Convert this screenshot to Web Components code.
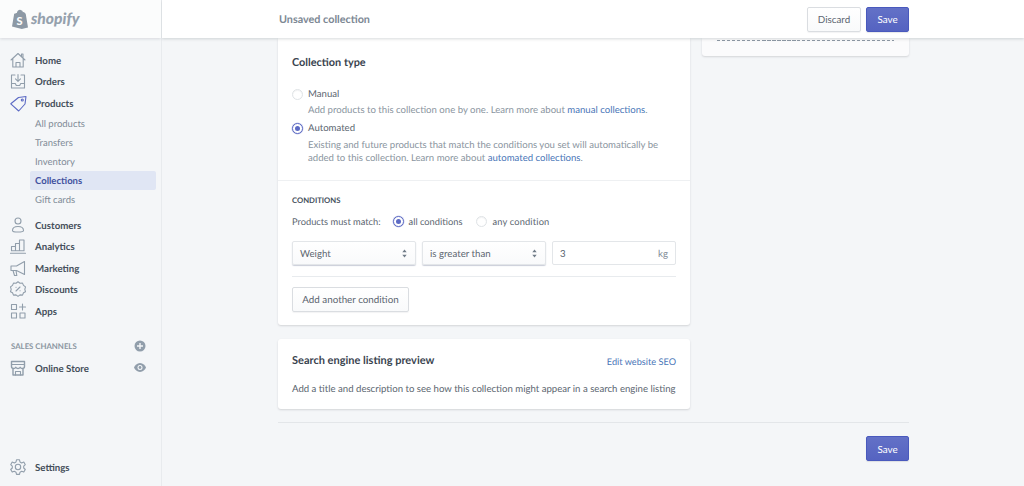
<!DOCTYPE html>
<html lang="en">
<head>
<meta charset="utf-8">
<title>Unsaved collection</title>
<style>
  html, body { margin: 0; height: 100%; overflow: hidden; background: #f4f6f8; }
  body { font-family: Lato, "Liberation Sans", sans-serif; font-size: 9.6px; color: #212b36; text-rendering: geometricPrecision; }
</style>
</head>
<body>
<admin-app>
  <shop-sidebar slot="sidebar">
    <nav-item icon="home" style="--top:11px">Home</nav-item>
    <nav-item icon="orders">Orders</nav-item>
    <nav-item icon="products" active>Products</nav-item>
    <sub-item>All products</sub-item>
    <sub-item>Transfers</sub-item>
    <sub-item>Inventory</sub-item>
    <sub-item selected>Collections</sub-item>
    <sub-item>Gift cards</sub-item>
    <nav-item icon="customers" style="--top:5px">Customers</nav-item>
    <nav-item icon="analytics">Analytics</nav-item>
    <nav-item icon="marketing">Marketing</nav-item>
    <nav-item icon="discounts">Discounts</nav-item>
    <nav-item icon="apps">Apps</nav-item>
    <channel-head>SALES CHANNELS</channel-head>
    <nav-item icon="store" trailing="eye">Online Store</nav-item>
    <nav-item icon="settings" slot="bottom">Settings</nav-item>
  </shop-sidebar>
  <top-bar slot="bar"></top-bar>
  <collection-form slot="content"></collection-form>
</admin-app>

<script>
const ICONS = {
  home: '<path d="M2 9 9 2.500 16 9M3.800 7.500V16h10.400V7.500M7 16v-4.500h4V16M12.500 5V3h1.500v3.500"/>',
  orders: '<path d="M6 3H2.500v13h13V3H12M2.500 11.500h3.800l1 2h3.400l1-2h3.800M9 2.500v6.500M6.500 6.800 9 9.300l2.500-2.500"/>',
  products: '<path d="M1.800 9.800 9.500 3.500 17 2.500l-1 7.500-6.300 7z"/><circle cx="13.300" cy="6" r="1"/>',
  customers: '<circle cx="9" cy="5" r="3"/><path d="M3.500 14.500c0-2.500 2-4 5.500-4s5.500 1.500 5.500 4c0 1.200-1 1.500-5.500 1.500s-5.500-.3-5.500-1.500z"/>',
  analytics: '<path d="M1.500 16.200h15M2.500 13.800V9.500h4v4.300M6.500 13.800V6.500h4v7.300M10.500 13.800V3h4.500v10.800M2.500 13.800H15"/>',
  marketing: '<path d="M2 7h5.500l8-4.500v13L7.500 11.500H2zM4 11.500 5.500 16.500h2.300L7 11.500"/>',
  discounts: '<path d="m9 1.800 2 1.500 2.500-.2 1 2.300 2 1.500-.7 2.400.7 2.400-2 1.100-1 2.300-2.500-.2-2 1.500-2-1.500-2.500.2-1-2.300-2-1.100.7-2.400-.7-2.400 2-1.500 1-2.300 2.500.2z"/><path d="m7 11 4-4M7 7.200h.1M11 10.800h.1"/>',
  apps: '<path d="M2.500 2.500h5v5h-5zM2.500 11h5v5h-5zM11 11h5v5h-5zM13.500 2v6M10.500 5h6"/>',
  store: '<path d="M4 10v6h10v-6M2.500 2.500h13v5c0 1.500-1.300 2-2.200 2s-1.600-.5-2.100-1.200c-.5.700-1.300 1.200-2.200 1.200s-1.700-.5-2.200-1.200c-.5.700-1.200 1.200-2.100 1.200S2.500 9 2.500 7.500z" stroke-width="1.400"/><path d="M2.500 5.500h13M6.500 16v-3.500h5V16"/>',
  settings: '<path d="m7.500 1.800h3l.5 2.200 1.700.9 2.100-.8 1.500 2.600-1.600 1.500v1.800l1.600 1.500-1.500 2.600-2.100-.8-1.700.9-.5 2.200h-3l-.5-2.200-1.700-.9-2.100.8-1.500-2.600 1.600-1.500V8.200L1.700 6.700l1.500-2.600 2.100.8L7 4z"/><circle cx="9" cy="9" r="2.700"/>'
};

class AdminApp extends HTMLElement {
  constructor() {
    super();
    this.attachShadow({ mode: 'open' }).innerHTML = `
      <style>
        :host { display: grid; grid-template-columns: 162px 1fr; height: 486px; width: 1024px; overflow: hidden; }
        .side { min-width: 0; }
        main { display: flex; flex-direction: column; min-width: 0; height: 486px; overflow: hidden; }
      </style>
      <div class="side"><slot name="sidebar"></slot></div>
      <main><slot name="bar"></slot><slot name="content"></slot></main>`;
  }
}

class ShopSidebar extends HTMLElement {
  constructor() {
    super();
    this.attachShadow({ mode: 'open' }).innerHTML = `
      <style>
        :host { display: flex; flex-direction: column; height: 486px; box-sizing: border-box; background: #f4f6f8; border-right: 1px solid #e8ebee; position: relative; }
        header { height: 38px; flex: none; background: #fbfcfc; box-shadow: 0 1px 3px rgba(33,43,54,.14); display: flex; align-items: center; gap: 2px; padding-left: 11px; box-sizing: border-box; }
        .word { font: italic 900 15.600px Lato, sans-serif; color: #95a1ad; margin-top: -1px; }
        nav { display: flex; flex-direction: column; }
        .bottom { margin-top: auto; padding-bottom: 8px; }
      </style>
      <header>
        <svg width="18" height="21" viewBox="0 0 18 21"><path fill="#8d99a5" d="M1 17.500 3.200 4.800c1.400-.5 2.200-.8 2.600-.9C6.300 2 7.600.8 9 .8c.5 0 .9.200 1.100.5 1 0 1.600.9 1.800 1.900l1.100-.3.800 1 .9.800L17 18.500 10.800 20z"/><text x="5.500" y="15.500" font-family="Lato" font-weight="900" font-size="11" fill="#fbfcfc">S</text></svg>
        <span class="word">shopify</span>
      </header>
      <nav><slot></slot></nav>
      <div class="bottom"><slot name="bottom"></slot></div>`;
  }
}

class NavItem extends HTMLElement {
  constructor() {
    super();
    const name = this.getAttribute('icon');
    const active = this.hasAttribute('active');
    const eye = this.getAttribute('trailing') === 'eye';
    this.attachShadow({ mode: 'open' }).innerHTML = `
      <style>
        :host { display: block; margin-top: var(--top, 0); }
        .row { display: flex; align-items: center; height: 21.600px; padding-left: 9px; padding-right: 15px; }
        svg.main { width: 18px; height: 18px; flex: none; fill: none; stroke: ${active ? '#5c6ac4' : '#919eab'}; stroke-width: 1.100; stroke-linejoin: round; stroke-linecap: round; }
        span { margin: 2px 0 0 8px; font-weight: 700; color: #454f5b; font-size: 9.700px; flex: 1; white-space: nowrap; }
      </style>
      <div class="row">
        <svg class="main" viewBox="0 0 18 18">${ICONS[name]}</svg>
        <span><slot></slot></span>
        ${eye ? '<svg width="12" height="9" viewBox="0 0 12 9"><path fill="#919eab" d="M6 0C3 0 1 2.300 0 4.500 1 6.700 3 9 6 9s5-2.300 6-4.500C11 2.300 9 0 6 0z"/><circle cx="6" cy="4.500" r="2.500" fill="#f4f6f8"/><circle cx="6" cy="4.500" r="1.400" fill="#919eab"/></svg>' : ''}
      </div>`;
  }
}

class SubItem extends HTMLElement {
  constructor() {
    super();
    const sel = this.hasAttribute('selected');
    this.attachShadow({ mode: 'open' }).innerHTML = `
      <style>
        :host { display: flex; align-items: center; box-sizing: border-box; height: 19px; margin-left: 30px; margin-right: 5px; padding: 2px 0 0 5px; border-radius: 2px; font-size: 9.500px; white-space: nowrap;
          background: ${sel ? '#e0e6f4' : 'transparent'}; color: ${sel ? '#43529f' : '#7f8b97'}; font-weight: ${sel ? 700 : 400}; }
      </style><slot></slot>`;
  }
}

class ChannelHead extends HTMLElement {
  constructor() {
    super();
    this.attachShadow({ mode: 'open' }).innerHTML = `
      <style>
        :host { display: flex; align-items: center; justify-content: space-between; height: 19px; margin-top: 15px; margin-bottom: 1px; padding: 0 15px 0 11px; font-size: 7.800px; font-weight: 700; color: #8a95a0; }
      </style>
      <span><slot></slot></span>
      <svg width="12" height="12" viewBox="0 0 12 12"><circle cx="6" cy="6" r="5.500" fill="#919eab"/><path d="M6 3v6M3 6h6" stroke="#f4f6f8" stroke-width="1.400"/></svg>`;
  }
}

class AppButton extends HTMLElement {
  constructor() {
    super();
    const primary = this.hasAttribute('primary');
    this.attachShadow({ mode: 'open' }).innerHTML = `
      <style>
        :host { display: inline-flex; align-items: center; justify-content: center; box-sizing: border-box; height: 25px; padding: 2px 11px 0; border-radius: 2px; font-size: 9.800px; white-space: nowrap;
          ${primary
            ? 'background: linear-gradient(#6371c7,#5563c1); color: #fff; border: 1px solid #4959bd; box-shadow: 0 1px 1px rgba(22,29,37,.1);'
            : 'background: linear-gradient(#fff,#f9fafb); color: #5c6670; border: 1px solid #dadde1; box-shadow: 0 1px 1px rgba(22,29,37,.05);'}
        }
      </style><slot></slot>`;
  }
}

class TopBar extends HTMLElement {
  constructor() {
    super();
    this.attachShadow({ mode: 'open' }).innerHTML = `
      <style>
        :host { display: flex; align-items: center; flex: none; height: 38px; box-sizing: border-box; background: #fff; box-shadow: 0 1px 3px rgba(33,43,54,.18); padding: 0 115px 0 117px; position: relative; z-index: 2; }
        .title { flex: 1; color: #7d8894; font-weight: 700; font-size: 10.800px; }
        .acts { display: flex; gap: 5px; }
        app-button.d { width: 54px; }
        app-button.s { width: 43px; }
      </style>
      <span class="title">Unsaved collection</span>
      <div class="acts"><app-button class="d">Discard</app-button><app-button class="s" primary>Save</app-button></div>`;
  }
}

class RadioDot extends HTMLElement {
  constructor() {
    super();
    const on = this.hasAttribute('checked');
    this.attachShadow({ mode: 'open' }).innerHTML = `
      <style>
        :host { display: inline-block; flex: none; width: 11px; height: 11px; box-sizing: border-box; border-radius: 50%; position: relative;
          background: #fff; border: 1px solid ${on ? '#5c6ac4' : '#dfe3e6'}; box-shadow: ${on ? '0 0 0 .5px rgba(92,106,196,.35)' : 'inset 0 1px 1px rgba(22,29,37,.05)'}; }
        i { position: absolute; inset: 2px; border-radius: 50%; background: ${on ? '#5c6ac4' : 'transparent'}; }
      </style><i></i>`;
  }
}

class RadioOption extends HTMLElement {
  constructor() {
    super();
    this.attachShadow({ mode: 'open' }).innerHTML = `
      <style>
        :host { display: block; }
        .l { display: flex; align-items: center; gap: 5px; height: 14px; color: #5c6670; font-size: 9.600px; }
        .h { margin-left: 16px; margin-top: 3px; color: #8a95a0; line-height: 13.500px; font-size: 9.600px; }
      </style>
      <div class="l"><radio-dot ${this.hasAttribute('checked') ? 'checked' : ''}></radio-dot><span>${this.getAttribute('label')}</span></div>
      <div class="h"><slot></slot></div>`;
  }
}

class SelectBox extends HTMLElement {
  constructor() {
    super();
    this.attachShadow({ mode: 'open' }).innerHTML = `
      <style>
        :host { display: flex; align-items: center; justify-content: space-between; box-sizing: border-box; height: 24px; width: 124px; padding: 2px 8px 0 7px; border: 1px solid #e3e6e9; border-radius: 2px; background: linear-gradient(#fff,#f9fafb); box-shadow: 0 1px 1px rgba(66,79,120,.28); color: #5c6670; font-size: 9.700px; }
        svg { margin-top: -2px; }
      </style>
      <slot></slot>
      <svg width="5" height="9" viewBox="0 0 5 9"><path fill="#707c88" d="M2.500 .5 4.700 3.300H.3zM2.500 8.500.3 5.700h4.400z"/></svg>`;
  }
}

class CollectionForm extends HTMLElement {
  constructor() {
    super();
    this.attachShadow({ mode: 'open' }).innerHTML = `
      <style>
        :host { display: block; padding-left: 116px; }
        a { color: #4a76b8; text-decoration: none; }
        .cols { display: flex; gap: 12px; align-items: flex-start; }
        .left { width: 412px; flex: none; }
        .card { background: #fff; box-shadow: 0 1px 2px rgba(63,63,68,.18); border-radius: 0 0 3px 3px; }
        .rail { width: 207px; height: 18px; background: #fbfbfc; box-shadow: 0 1px 2px rgba(63,63,68,.18); border-radius: 0 0 3px 3px; padding: 2px 15px 0; box-sizing: border-box; }
        .dash { height: 1px; background: repeating-linear-gradient(90deg, #8d99a5 0 3.500px, transparent 3.500px 5px); }
        .sec1 { height: 143px; box-sizing: border-box; padding: 18px 14px 0; border-bottom: 1px solid #eef0f2; }
        h2 { margin: 0; font-size: 10.900px; font-weight: 700; color: #3a444f; line-height: 14px; }
        .opts { margin-top: 17px; display: flex; flex-direction: column; gap: 4px; }
        .sec2 { height: 144px; box-sizing: border-box; padding: 14px 14px 0; }
        h3 { margin: 0; font-size: 7.700px; font-weight: 700; color: #454f5b; line-height: 10px; }
        .match { display: flex; align-items: center; height: 14px; margin-top: 9px; color: #5c6670; font-size: 9.300px; }
        .match radio-dot { margin: 0 5px 0 12px; }
        .match radio-dot.b { margin-left: 14px; }
        .match .any { letter-spacing: .16px; }
        .row { display: flex; gap: 6px; margin-top: 13px; }
        .num { flex: 1; display: flex; justify-content: space-between; align-items: center; box-sizing: border-box; height: 24px; padding: 2px 7px 0 7px; border: 1px solid #e3e6e9; border-radius: 2px; color: #5c6670; font-size: 9.700px; }
        .num span:last-child { color: #7f8b97; }
        hr { border: 0; border-top: 1px solid #e8ebee; margin: 11px 0 10px; }
        .add { width: 117px; padding: 1px 0 0; }
        .card.seo { margin-top: 14px; height: 70px; box-sizing: border-box; padding: 15px 14px 0; border-radius: 3px; }
        .top { display: flex; justify-content: space-between; align-items: center; }
        .top h2 { font-size: 11px; }
        .top a { font-size: 9.200px; }
        .seo p { margin: 15px 0 0; color: #5c6670; line-height: 14px; font-size: 9.620px; white-space: nowrap; }
        .foot { width: 631px; margin-top: 13px; border-top: 1px solid #e3e6e9; padding-top: 13px; display: flex; justify-content: flex-end; }
        .foot app-button { width: 43px; }
      </style>
      <div class="cols">
        <div class="left">
          <section class="card">
            <div class="sec1">
              <h2>Collection type</h2>
              <div class="opts">
                <radio-option label="Manual">Add products to this collection one by one. Learn more about <a style="color:#4a76b8;text-decoration:none" href="#">manual collections</a>.</radio-option>
                <radio-option label="Automated" checked>Existing and future products that match the conditions you set will automatically be<br>added to this collection. Learn more about <a style="color:#4a76b8;text-decoration:none" href="#">automated collections</a>.</radio-option>
              </div>
            </div>
            <div class="sec2">
              <h3>CONDITIONS</h3>
              <div class="match"><span>Products must match:</span><radio-dot checked></radio-dot><span>all conditions</span><radio-dot class="b"></radio-dot><span class="any">any condition</span></div>
              <div class="row">
                <select-box>Weight</select-box>
                <select-box>is greater than</select-box>
                <div class="num"><span>3</span><span>kg</span></div>
              </div>
              <hr>
              <app-button class="add">Add another condition</app-button>
            </div>
          </section>
          <section class="card seo">
            <div class="top"><h2>Search engine listing preview</h2><a href="#">Edit website SEO</a></div>
            <p>Add a title and description to see how this collection might appear in a search engine listing</p>
          </section>
        </div>
        <aside class="rail"><div class="dash"></div></aside>
      </div>
      <div class="foot"><app-button primary>Save</app-button></div>`;
  }
}

customElements.define('nav-item', NavItem);
customElements.define('sub-item', SubItem);
customElements.define('channel-head', ChannelHead);
customElements.define('shop-sidebar', ShopSidebar);
customElements.define('app-button', AppButton);
customElements.define('top-bar', TopBar);
customElements.define('radio-dot', RadioDot);
customElements.define('radio-option', RadioOption);
customElements.define('select-box', SelectBox);
customElements.define('collection-form', CollectionForm);
customElements.define('admin-app', AdminApp);
</script>
</body>
</html>
